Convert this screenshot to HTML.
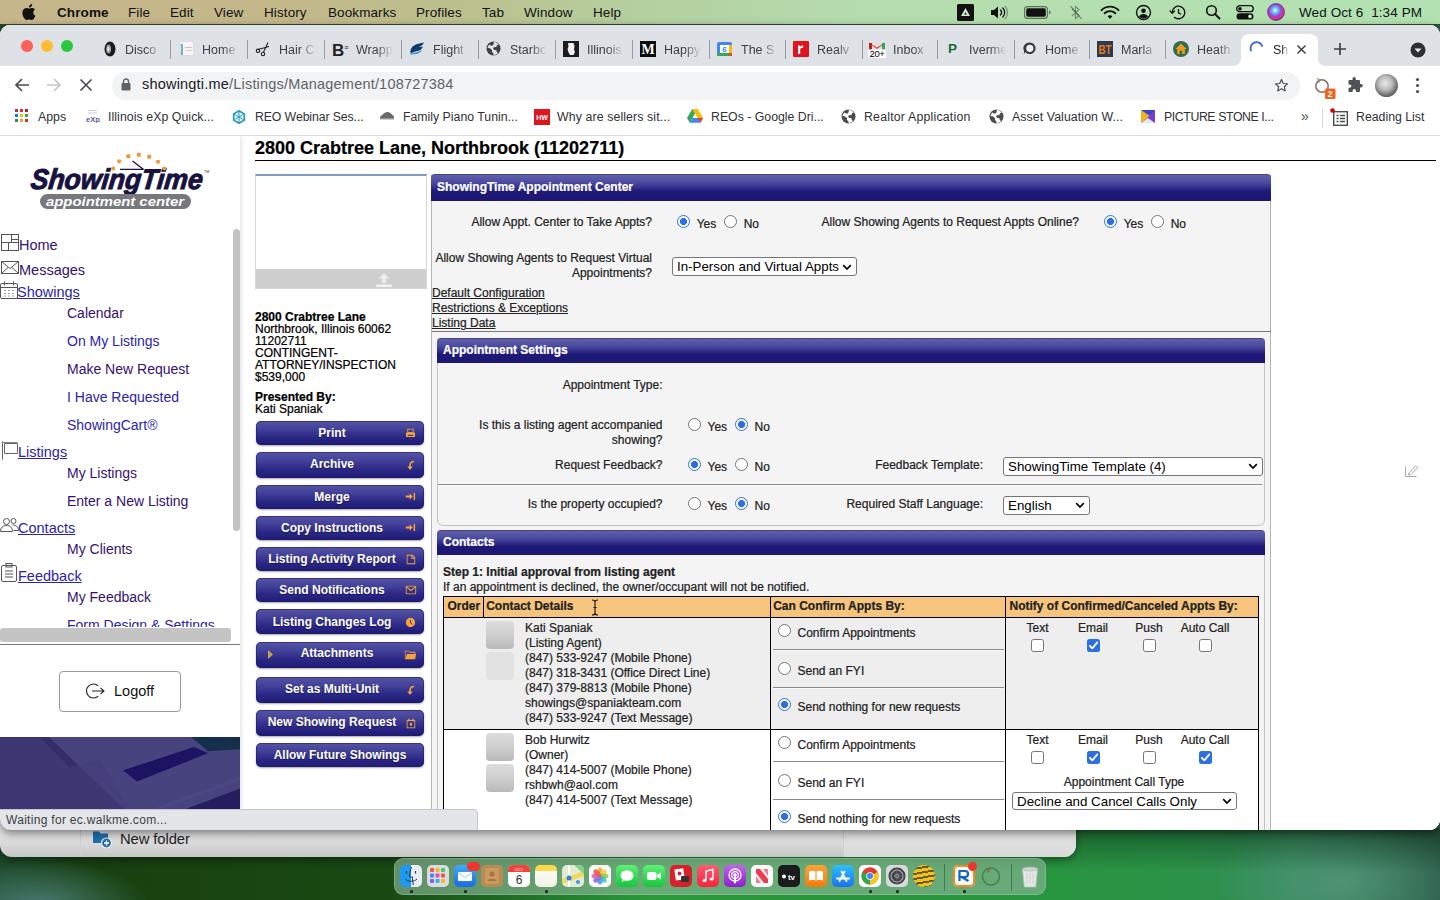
<!DOCTYPE html>
<html lang="en">
<head>
<meta charset="utf-8">
<title>ShowingTime</title>
<style>
*{box-sizing:border-box;margin:0;padding:0}
html,body{width:1440px;height:900px;overflow:hidden}
body{font-family:"Liberation Sans",Arial,sans-serif;position:relative;color:#000;
background:
 linear-gradient(180deg,rgba(10,40,20,0) 0,rgba(10,40,20,0) 828px,rgba(10,40,20,.45) 830px,rgba(10,40,20,0) 872px),
 radial-gradient(ellipse 110px 45px at 40px 905px,rgba(80,130,125,.85) 0%,rgba(80,130,125,0) 100%),
 radial-gradient(ellipse 130px 70px at 1345px 882px,rgba(95,160,135,.65) 0%,rgba(95,160,135,0) 100%),
 linear-gradient(90deg,#1d4a2a 0%,#17400f 7%,#1a4a14 27%,#1f6a25 35%,#2a9a3a 45%,#289540 73%,#2b9448 82%,#33885a 90%,#2a5a46 100%);}
.abs{position:absolute}
/* ---------- mac menu bar ---------- */
#menubar{position:absolute;left:0;top:0;width:1440px;height:25px;
background:linear-gradient(90deg,#c6b68b 0%,#c3b88a 20%,#bcc08e 32%,#b4d0a0 45%,#b5dcae 60%,#b4e0b0 80%,#b2e2b2 100%);
border-bottom:1px solid #33442b;font-size:13.5px;color:#111}
#menubar span{position:absolute;top:4.500px;white-space:nowrap;letter-spacing:.1px}
/* ---------- background finder window ---------- */
#bgwin{position:absolute;left:0;top:700px;width:1076px;height:157px;background:linear-gradient(180deg,#eaeaea 0,#e8e8e8 82%,#dcdcdc 90%,#c6c6c6 100%);border-radius:0 0 12px 12px;box-shadow:0 2px 8px rgba(0,0,0,.45)}
/* ---------- chrome window ---------- */
#winshadow{position:absolute;left:0;top:25px;width:1440px;height:805px;border-radius:10px 10px 11px 11px;box-shadow:0 3px 10px rgba(0,0,0,.5);background:#fff}
#win{position:absolute;left:0;top:0;width:1440px;height:830px;background:#fff;clip-path:inset(25px 0 0 0 round 10px 10px 11px 11px);overflow:hidden}
#tabstrip{position:absolute;left:0;top:25px;width:1440px;height:41px;background:#dee1e6}
#toolbar{position:absolute;left:0;top:66px;width:1440px;height:37px;background:#fff}
#bookbar{position:absolute;left:0;top:103px;width:1440px;height:33px;background:#fff;border-bottom:1px solid #dcdcdc}
#page{position:absolute;left:0;top:0;width:1440px;height:830px;background:#fff;overflow:hidden;clip-path:inset(135px 0 0 0);font-size:12px}

.tl{position:absolute;top:15px;width:12px;height:12px;border-radius:50%}
.tsep{position:absolute;top:15px;width:1px;height:19px;background:#9a9ea4}
.tico{position:absolute;top:16px;height:16px;display:block;line-height:0}
.ttxt{position:absolute;top:18px;font-size:12.500px;color:#3c4043;white-space:nowrap;overflow:hidden;width:37px;-webkit-mask-image:linear-gradient(90deg,#000 55%,transparent 100%);mask-image:linear-gradient(90deg,#000 55%,transparent 100%)}
#acttab{position:absolute;left:1241px;top:9px;width:76.500px;height:32px;background:#fff;border-radius:8px 8px 0 0}
#omni{position:absolute;left:112px;top:5.500px;width:1188px;height:28px;border-radius:14px;background:#f1f3f4}
.bico{position:absolute;top:6px;line-height:0;display:block}
.btxt{position:absolute;top:7px;font-size:12.300px;color:#2f3134;white-space:nowrap}

#side{position:absolute;left:0;top:135px;width:240px;height:695px;background:#fff;box-shadow:1px 0 5px rgba(0,0,0,.13)}
#side>*{margin-top:-135px}
.nav{position:absolute;font-size:14px;line-height:18px;white-space:nowrap}

.t{position:absolute;white-space:nowrap;font-size:12px;color:#000;-webkit-text-stroke:.22px}
.t.g{color:#222}
.rd{position:absolute;width:13px;height:13px;border-radius:50%;border:1px solid #767676;background:#fff}
.rd.on{border:1.500px solid #2c6fe3;background:radial-gradient(circle,#2c6fe3 0,#2c6fe3 3.200px,#fff 3.900px)}
.cb{position:absolute;width:13px;height:13px;border-radius:2.500px;border:1px solid #767676;background:#fff;line-height:0}
.cb.on{border:none;background:#2c6fe3}
.sel{position:absolute;border:1px solid #767676;border-radius:3px;background:#fff;font-size:13.330px;line-height:16px;color:#000;white-space:nowrap;overflow:hidden}
.sel span{position:absolute;left:4px;top:1.200px}
.sel svg{position:absolute;right:4px;top:5.500px}
.hdr{position:absolute;background:linear-gradient(180deg,#6060a8 0%,#4d4ba1 28%,#312d8b 50%,#1e1877 64%,#1c1674 100%);border-top:1px solid #45457f}
.btn{position:absolute;left:255.500px;width:168.500px;border-radius:5px;background:linear-gradient(180deg,#5553a2 0%,#45439a 30%,#2b2785 68%,#1e1a76 100%);box-shadow:0 1px 2px rgba(0,0,0,.35),inset 0 0 0 1px rgba(30,28,100,.55)}
.btn b{position:absolute;width:180px;text-align:center;color:#fff;font-size:12px;line-height:15px;white-space:nowrap;text-shadow:0 1px 1px rgba(0,0,20,.45)}
.btn em{position:absolute;right:7px;line-height:0;display:block;width:13px;text-align:center;transform:scale(.9)}
.sq{position:absolute;width:28px;height:28px;border-radius:4px;background:linear-gradient(180deg,#dcdcdc 0%,#cfcfcf 50%,#b9b9b9 100%)}
.sq.dis{background:#e2e2e2}

.di{position:absolute;top:6px;width:22px;height:22px;line-height:0}
.dd{position:absolute;top:31px;width:3px;height:3px;border-radius:50%;background:#0a1a0a}
/* ---------- dock ---------- */
#dock{position:absolute;left:394px;top:858px;width:652px;height:37px;border-radius:9px;background:rgba(135,180,148,.66);border:1px solid rgba(190,225,190,.3)}
</style>
</head>
<body>
<div id="menubar">
<svg class="abs" style="left:21px;top:3px" width="15" height="18" viewBox="0 0 15 18"><path fill="#111" d="M12.3 9.6c0-2 1.6-2.9 1.7-3-0.9-1.4-2.4-1.5-2.9-1.6-1.2-.1-2.400.7-3 .7-.6 0-1.600-.7-2.600-.7C4.100 5 2.800 5.800 2.100 7c-1.400 2.500-.4 6.100 1 8.100.7 1 1.500 2.100 2.500 2 1-.0 1.400-.6 2.600-.6 1.200 0 1.500.6 2.600.6 1.100-.0 1.800-1 2.400-2 .8-1.100 1.100-2.200 1.100-2.300-.0-.0-2.100-.8-2.100-3.200zM10.400 3.400c.5-.7.900-1.600.800-2.500-.8.0-1.700.5-2.300 1.200-.5.600-.9 1.500-.8 2.400.9.100 1.800-.4 2.300-1.100z"/></svg>
<span style="left:57px;font-weight:bold">Chrome</span>
<span style="left:128px">File</span>
<span style="left:170px">Edit</span>
<span style="left:214px">View</span>
<span style="left:264px">History</span>
<span style="left:328px">Bookmarks</span>
<span style="left:416px">Profiles</span>
<span style="left:482px">Tab</span>
<span style="left:524px">Window</span>
<span style="left:593px">Help</span>
<span style="left:1299px">Wed Oct 6&nbsp; 1:34 PM</span>

<svg class="abs" style="left:957px;top:4px" width="17" height="17" viewBox="0 0 17 17"><rect width="17" height="17" rx="1.500" fill="#111"/><path d="M8.500 4l4.500 8h-9z" fill="#cfe6c8"/><path d="M8.500 8.200l1.300 2.300H7.200z" fill="#111"/></svg>
<svg class="abs" style="left:990px;top:5px" width="20" height="15" viewBox="0 0 20 15"><path d="M1 5h3l4-3.500v12L4 10H1z" fill="#111"/><path d="M10.500 5a3.500 3.500 0 0 1 0 5M12.800 3a6.500 6.500 0 0 1 0 9" fill="none" stroke="#111" stroke-width="1.300" stroke-linecap="round"/><path d="M15.200 1.300a9.500 9.500 0 0 1 0 12.400" fill="none" stroke="#111" stroke-width="1.300" stroke-linecap="round" opacity=".35"/></svg>
<svg class="abs" style="left:1024px;top:6px" width="27" height="13" viewBox="0 0 27 13"><rect x="0.600" y="0.600" width="22.800" height="11.800" rx="3" fill="none" stroke="#111" stroke-opacity=".55" stroke-width="1.100"/><rect x="2.200" y="2.200" width="19.600" height="8.600" rx="1.800" fill="#111"/><path d="M25 4.500v4c1-.3 1.500-1 1.500-2s-.5-1.700-1.500-2z" fill="#111" fill-opacity=".55"/></svg>
<svg class="abs" style="left:1069px;top:4px" width="14" height="17" viewBox="0 0 14 17"><path d="M3 5l7 6.500-3.500 3V2.500l3.500 3L3 12" fill="none" stroke="#111" stroke-opacity=".4" stroke-width="1.100"/><path d="M1.500 2l11 13" stroke="#111" stroke-opacity=".5" stroke-width="1.100"/></svg>
<svg class="abs" style="left:1100px;top:5px" width="20" height="15" viewBox="0 0 20 15"><path d="M1.500 5.200a12 12 0 0 1 17 0" fill="none" stroke="#111" stroke-width="1.900" stroke-linecap="round"/><path d="M4.600 8.300a7.700 7.700 0 0 1 10.800 0" fill="none" stroke="#111" stroke-width="1.900" stroke-linecap="round"/><path d="M7.600 11.300a3.500 3.500 0 0 1 4.800 0L10 13.900z" fill="#111"/></svg>
<svg class="abs" style="left:1135px;top:4px" width="17" height="17" viewBox="0 0 17 17"><circle cx="8.500" cy="8.500" r="7" fill="none" stroke="#111" stroke-width="1.400"/><circle cx="8.500" cy="6.800" r="2.300" fill="#111"/><path d="M4 12.800c.8-2 2.500-2.800 4.500-2.800s3.700.8 4.500 2.800a6.500 6.500 0 0 1-9 0z" fill="#111"/></svg>
<svg class="abs" style="left:1169px;top:4px" width="18" height="17" viewBox="0 0 18 17"><path d="M3.200 8.500a6.300 6.300 0 1 1 1.900 4.500" fill="none" stroke="#111" stroke-width="1.400"/><path d="M.8 6.500l2.400 2.800 2.600-2.600" fill="none" stroke="#111" stroke-width="1.300"/><path d="M9.500 5v3.800l2.500 1.500" fill="none" stroke="#111" stroke-width="1.300"/></svg>
<svg class="abs" style="left:1205px;top:4px" width="16" height="16" viewBox="0 0 16 16"><circle cx="6.500" cy="6.500" r="4.800" fill="none" stroke="#111" stroke-width="1.600"/><path d="M10 10l4.500 4.500" stroke="#111" stroke-width="1.900" stroke-linecap="round"/></svg>
<svg class="abs" style="left:1236px;top:5px" width="18" height="15" viewBox="0 0 18 15"><rect x="0.700" y="0.700" width="16.600" height="6" rx="3" fill="none" stroke="#111" stroke-width="1.300"/><circle cx="4" cy="3.700" r="1.800" fill="#111"/><rect x="0.500" y="8.300" width="17" height="6.200" rx="3.100" fill="#111"/><circle cx="14" cy="11.400" r="1.800" fill="#cfe6c8"/></svg>
<svg class="abs" style="left:1267px;top:3px" width="18" height="18" viewBox="0 0 18 18"><defs><radialGradient id="siri" cx="45%" cy="40%" r="65%"><stop offset="0" stop-color="#fff"/><stop offset=".25" stop-color="#5ac8fa"/><stop offset=".55" stop-color="#a63fd9"/><stop offset=".8" stop-color="#e0338a"/><stop offset="1" stop-color="#1d1b5e"/></radialGradient></defs><circle cx="9" cy="9" r="8.500" fill="url(#siri)"/><circle cx="9" cy="9" r="8.500" fill="none" stroke="#1d1b5e" stroke-opacity=".5"/></svg>


</div>
<div id="bgwin"><i class="abs" style="left:80px;top:129px;width:1px;height:28px;background:#d0d0d0"></i>
<svg class="abs" style="left:93px;top:130px" width="19" height="19" viewBox="0 0 19 19"><path d="M0 1.500h6l1.500 2H15v9.500H0z" fill="#1f6fb0"/><circle cx="13.500" cy="13" r="5" fill="#1f6fb0" stroke="#ececec" stroke-width="1.200"/><path d="M13.500 10.500v5M11 13h5" stroke="#fff" stroke-width="1.300"/></svg>
<span class="abs" style="left:120px;top:131px;font-size:14.800px;color:#222;letter-spacing:-.1px">New folder</span>
<i class="abs" style="left:843px;top:129px;width:233px;height:28px;background:linear-gradient(180deg,#e6e6e6,#d9d9d9);border-left:1px solid #cfcfcf;border-radius:0 0 12px 0"></i></div>
<div id="winshadow"></div>
<div id="win">
  <div id="page">
<div id="side">
<svg class="abs" style="left:24px;top:148px" width="192" height="66" viewBox="0 0 192 66">
<path d="M96 21.300h23.300L108.500 13" fill="none" stroke="#17123f" stroke-width="1.300" stroke-linejoin="round"/>
<text x="6" y="41.500" font-family="Liberation Sans,sans-serif" font-size="28.500" font-weight="bold" font-style="italic" fill="#17123f" stroke="#17123f" stroke-width="1" textLength="172" lengthAdjust="spacingAndGlyphs" transform="skewX(-6)" style="transform-origin:90px 41px">ShowingTime</text>
<g fill="#ee9a3c"><circle cx="89.300" cy="20.500" r="2"/><circle cx="95.200" cy="13.300" r="2.100"/><circle cx="104.300" cy="8.300" r="2.200"/><circle cx="114.800" cy="6.700" r="2.200"/><circle cx="125.200" cy="8.800" r="2.200"/><circle cx="134" cy="13.800" r="2.100"/><circle cx="140.200" cy="20.500" r="2"/></g>
<rect x="16" y="46" width="151" height="15" rx="7.500" fill="#77787b"/>
<text x="91" y="57.500" font-family="Liberation Sans,sans-serif" font-size="13.500" font-weight="bold" font-style="italic" fill="#fff" text-anchor="middle" textLength="138" lengthAdjust="spacingAndGlyphs">appointment center</text>
<text x="180" y="25" font-family="Liberation Sans,sans-serif" font-size="3.500" fill="#17123f">TM</text>
</svg>
<span class="nav" style="left:19px;top:236px;color:#34126f;font-size:14.500px;">Home</span>
<span class="nav" style="left:19px;top:261px;color:#34126f;font-size:14.500px;">Messages</span>
<span class="nav" style="left:17px;top:283px;color:#2a24ad;text-decoration:underline;font-size:14.500px;">Showings</span>
<span class="nav" style="left:67px;top:304px;color:#34126f;">Calendar</span>
<span class="nav" style="left:67px;top:332px;color:#2a24ad;">On My Listings</span>
<span class="nav" style="left:67px;top:360px;color:#34126f;">Make New Request</span>
<span class="nav" style="left:67px;top:388px;color:#2a24ad;">I Have Requested</span>
<span class="nav" style="left:67px;top:416px;color:#2a24ad;">ShowingCart®</span>
<span class="nav" style="left:18px;top:443px;color:#2a24ad;text-decoration:underline;font-size:14.500px;">Listings</span>
<span class="nav" style="left:67px;top:464px;color:#34126f;">My Listings</span>
<span class="nav" style="left:67px;top:492px;color:#34126f;">Enter a New Listing</span>
<span class="nav" style="left:18px;top:519px;color:#2a24ad;text-decoration:underline;font-size:14.500px;">Contacts</span>
<span class="nav" style="left:67px;top:540px;color:#34126f;">My Clients</span>
<span class="nav" style="left:18px;top:567px;color:#2a24ad;text-decoration:underline;font-size:14.500px;">Feedback</span>
<span class="nav" style="left:67px;top:588px;color:#34126f;">My Feedback</span>
<span class="nav" style="left:67px;top:616px;color:#2a24ad;">Form Design &amp; Settings</span>
<svg class="abs" style="left:1px;top:234px" width="18" height="17" viewBox="0 0 18 17" fill="none" stroke="#555" stroke-width="1"><rect x="0.500" y="0.500" width="10" height="8"/><rect x="10.500" y="0.500" width="7" height="5"/><rect x="0.500" y="8.500" width="7" height="8"/><rect x="7.500" y="8.500" width="10" height="8"/><path d="M10.500 5.500h7v3"/></svg>
<svg class="abs" style="left:1px;top:261px" width="18" height="13" viewBox="0 0 18 13" fill="none" stroke="#555" stroke-width="1"><rect x="0.500" y="0.500" width="17" height="12"/><path d="M0.500 0.500l8.500 7 8.500-7M0.500 12.500l6.500-6M17.500 12.500l-6.500-6"/></svg>
<svg class="abs" style="left:0px;top:281px" width="18" height="18" viewBox="0 0 18 18" fill="none" stroke="#555" stroke-width="1"><rect x="0.500" y="2.500" width="17" height="15" rx="1.500"/><path d="M0.500 6.500h17M4.500 0.500v4M13.500 0.500v4"/><path d="M4 9.500h2M8 9.500h2M12 9.500h2M4 12.500h2M8 12.500h2M12 12.500h2M4 15h2M8 15h2M12 15h2" stroke="#999"/></svg>
<svg class="abs" style="left:1px;top:441px" width="18" height="19" viewBox="0 0 18 19" fill="none" stroke="#666" stroke-width="1"><path d="M1.500 0.500v18M3.500 2.500h13v10h-13z"/><path d="M0.500 1.500h16" stroke="#888"/></svg>
<svg class="abs" style="left:0px;top:517px" width="19" height="17" viewBox="0 0 19 17" fill="none" stroke="#555" stroke-width="1"><circle cx="6.500" cy="4.500" r="3"/><path d="M0.500 14.500c0-4 2.500-6 6-6s6 2 6 6z"/><circle cx="13.500" cy="4" r="2.500"/><path d="M12.500 8c3.500 0 6 2 6 5.500h-5"/></svg>
<svg class="abs" style="left:1px;top:563px" width="17" height="20" viewBox="0 0 17 20" fill="none" stroke="#555" stroke-width="1"><rect x="0.500" y="2.500" width="15" height="16" rx="1.500"/><rect x="5" y="0.500" width="6" height="3.500"/><path d="M4 8h8M4 11h8M4 14h8"/></svg>
<i class="abs" style="left:233px;top:229px;width:7px;height:302px;background:#c2c2c2;border-radius:4px"></i>
<i class="abs" style="left:0;top:627px;width:232px;height:16px;background:#fff"></i>
<i class="abs" style="left:0;top:628px;width:231px;height:14px;background:#c4c4c4;border-radius:3px"></i>
<i class="abs" style="left:0;top:644px;width:240px;height:1px;background:#777"></i>
<div class="abs" style="left:59px;top:671px;width:122px;height:41px;border:1px solid #9a9a9a;border-radius:4px;background:#fff"></div>
<svg class="abs" style="left:86px;top:682px" width="19" height="18" viewBox="0 0 19 18" fill="none" stroke="#222" stroke-width="1.100"><path d="M12.200 3.800A7 7 0 1 0 12.200 14.200"/><path d="M6 9h12M14.500 5.800L18 9l-3.500 3.200"/></svg>
<span class="abs" style="left:114px;top:683px;font-size:14.500px;color:#111">Logoff</span>
<svg class="abs" style="left:0;top:737px" width="240" height="93" viewBox="0 0 240 92" preserveAspectRatio="none">
<rect width="240" height="92" fill="#3d3773"/>
<path d="M48 0H240V92H140z" fill="#47437f"/>
<path d="M40 0h9l76 72h-14z" fill="#342d69"/>
<path d="M70 30l30-8 30 50H110z" fill="#443f7b" opacity=".6"/>
<path d="M191 0h49v12l-32 2z" fill="#14304c"/>
<path d="M123 33l71-23 14 6-71 28z" fill="#1c1463"/>
<path d="M184 72l56-21v41H184z" fill="#241d60"/>
<path d="M150 72l90-33v4l-80 29z" fill="#4d4988" opacity=".7"/>
</svg>
</div>

<span class="t " style="top:137.16px;line-height:22px;font-size:18px;font-weight:bold;left:255px;">2800 Crabtree Lane, Northbrook (11202711)</span>
<i class="abs" style="left:255px;top:160px;width:1181px;height:1px;background:#000"></i>
<div class="abs" style="left:255px;top:174px;width:172px;height:115px;border:1px solid #d6d6d6;border-top:2px solid #7f9dc4;background:#fff"><i class="abs" style="left:0;bottom:0;width:170px;height:19px;background:#cfcfcf"></i><svg class="abs" style="left:120px;top:97px" width="16" height="14" viewBox="0 0 16 14"><path d="M8 0l5 5.500H10V10H6V5.500H3z" fill="#eee"/><rect x="0" y="11.500" width="16" height="2.500" fill="#eee"/></svg></div>
<span class="t" style="left:255px;top:311px;line-height:12px;font-weight:bold;">2800 Crabtree Lane</span>
<span class="t" style="left:255px;top:323px;line-height:12px;">Northbrook, Illinois 60062</span>
<span class="t" style="left:255px;top:335px;line-height:12px;">11202711</span>
<span class="t" style="left:255px;top:347px;line-height:12px;">CONTINGENT-</span>
<span class="t" style="left:255px;top:359px;line-height:12px;">ATTORNEY/INSPECTION</span>
<span class="t" style="left:255px;top:371px;line-height:12px;">$539,000</span>
<span class="t" style="left:255px;top:391px;line-height:12px;font-weight:bold;">Presented By:</span>
<span class="t" style="left:255px;top:403px;line-height:12px;">Kati Spaniak</span>
<div class="btn" style="top:420.7px;height:24.4px"><b style="left:-13.5px;top:5.5px">Print</b><em style="top:7.2px"><svg width="11" height="11" viewBox="0 0 11 11"><rect x="2.500" y="0.500" width="6" height="4" fill="none" stroke="#f6a33a" stroke-width="1"/><rect x="0.500" y="4.500" width="10" height="5" rx="1" fill="#f6a33a"/><rect x="2.500" y="7" width="6" height="1.200" fill="#3a3585"/></svg></em></div>
<div class="btn" style="top:451.8px;height:26.0px"><b style="left:-13.5px;top:5.3px">Archive</b><em style="top:8.0px"><svg width="10" height="11" viewBox="0 0 10 11"><path d="M8.500 1C6 1 4 2.500 4 5.500V8" fill="none" stroke="#f6a33a" stroke-width="1.800"/><path d="M1 6.500h6L4 10.500z" fill="#f6a33a"/></svg></em></div>
<div class="btn" style="top:484.9px;height:24.0px"><b style="left:-13.5px;top:5.3px">Merge</b><em style="top:7.0px"><svg width="11" height="9" viewBox="0 0 11 9"><path d="M0 4.500h6" stroke="#f6a33a" stroke-width="2"/><path d="M4.500 1L8 4.500 4.500 8z" fill="#f6a33a"/><rect x="9" y="0.500" width="1.800" height="8" fill="#f6a33a"/></svg></em></div>
<div class="btn" style="top:516px;height:24px"><b style="left:-13.5px;top:5.3px">Copy Instructions</b><em style="top:7.0px"><svg width="11" height="9" viewBox="0 0 11 9"><path d="M0 4.500h6" stroke="#f6a33a" stroke-width="2"/><path d="M4.500 1L8 4.500 4.500 8z" fill="#f6a33a"/><rect x="9" y="0.500" width="1.800" height="8" fill="#f6a33a"/></svg></em></div>
<div class="btn" style="top:547px;height:23.8px"><b style="left:-13.5px;top:5.2px">Listing Activity Report</b><em style="top:6.9px"><svg width="10" height="11" viewBox="0 0 10 11"><path d="M0.600 0.600H6.500L9.400 3.500V10.400H0.600z" fill="none" stroke="#f6a33a" stroke-width="1.200"/><path d="M6 0.600V4H9.400" fill="none" stroke="#f6a33a" stroke-width="1.200"/></svg></em></div>
<div class="btn" style="top:577.8px;height:23.8px"><b style="left:-13.5px;top:5.2px">Send Notifications</b><em style="top:6.9px"><svg width="12" height="10" viewBox="0 0 12 10"><rect x="0.600" y="0.600" width="10.800" height="8.800" rx="1" fill="none" stroke="#f6a33a" stroke-width="1.200"/><path d="M1 1.500l5 4 5-4" fill="none" stroke="#f6a33a" stroke-width="1.200"/></svg></em></div>
<div class="btn" style="top:609px;height:25.4px"><b style="left:-13.5px;top:6.0px">Listing Changes Log</b><em style="top:7.7px"><svg width="11" height="11" viewBox="0 0 11 11"><circle cx="5.500" cy="5.500" r="5.200" fill="#f6a33a"/><path d="M5.500 2.500V6l2 1.500" fill="none" stroke="#3a3585" stroke-width="1.100"/></svg></em></div>
<div class="btn" style="top:642.2px;height:25.6px"><b style="left:-8.5px;top:4.1px">Attachments</b><em style="top:7.8px"><svg width="13" height="10" viewBox="0 0 13 10"><path d="M0.500 0.500h4l1 1.500h6V9.500H0.500z" fill="none" stroke="#f6a33a" stroke-width="1"/><path d="M2.500 4h10.200L11 9.500H0.800z" fill="#f6a33a"/></svg></em><svg class="abs" style="left:12px;top:8.3px" width="6" height="9" viewBox="0 0 6 9"><path d="M0 0l5 4.500L0 9z" fill="#c9a050"/></svg></div>
<div class="btn" style="top:676.7px;height:26.2px"><b style="left:-13.5px;top:5.1px">Set as Multi-Unit</b><em style="top:8.1px"><svg width="10" height="11" viewBox="0 0 10 11"><path d="M8.500 1C6 1 4 2.500 4 5.500V8" fill="none" stroke="#f6a33a" stroke-width="1.800"/><path d="M1 6.500h6L4 10.500z" fill="#f6a33a"/></svg></em></div>
<div class="btn" style="top:710px;height:25.6px"><b style="left:-13.5px;top:5.1px">New Showing Request</b><em style="top:7.8px"><svg width="10" height="11" viewBox="0 0 10 11"><rect x="0.600" y="2.100" width="8.800" height="8.300" fill="none" stroke="#f6a33a" stroke-width="1.200"/><rect x="2" y="0" width="1.500" height="3" fill="#f6a33a"/><rect x="6.500" y="0" width="1.500" height="3" fill="#f6a33a"/><rect x="3.800" y="5" width="2.400" height="3" fill="#f6a33a"/></svg></em></div>
<div class="btn" style="top:743px;height:24px"><b style="left:-5.5px;top:5.3px">Allow Future Showings</b></div>
<div class="abs" style="left:431px;top:175px;width:840px;height:700px;background:#f4f4f4;border:1px solid #b4b4b4;border-top:none"></div>
<div class="hdr" style="left:431px;top:174px;width:840px;height:26.500px;border-radius:4px 4px 0 0"></div>
<span class="t " style="top:180.34px;line-height:15px;font-weight:bold;color:#fff;left:437px;">ShowingTime Appointment Center</span>
<span class="t g" style="top:214.84px;line-height:15px;right:788px;text-align:right;">Allow Appt. Center to Take Appts?</span>
<i class="rd on" style="left:676.5px;top:215.2px"></i>
<span class="t g" style="top:216.84px;line-height:15px;left:696.7px;">Yes</span>
<i class="rd" style="left:723.5px;top:215.2px"></i>
<span class="t g" style="top:216.84px;line-height:15px;left:743.7px;">No</span>
<span class="t g" style="top:214.84px;line-height:15px;right:361px;text-align:right;">Allow Showing Agents to Request Appts Online?</span>
<i class="rd on" style="left:1103.5px;top:215.2px"></i>
<span class="t g" style="top:216.84px;line-height:15px;left:1123.7px;">Yes</span>
<i class="rd" style="left:1150.5px;top:215.2px"></i>
<span class="t g" style="top:216.84px;line-height:15px;left:1170.7px;">No</span>
<span class="t g" style="top:251.34px;line-height:15px;right:788px;text-align:right;">Allow Showing Agents to Request Virtual</span>
<span class="t g" style="top:266.34px;line-height:15px;right:788px;text-align:right;">Appointments?</span>
<div class="sel" style="left:672px;top:257px;width:185px;height:18.5px"><span>In-Person and Virtual Appts</span><svg width="10" height="7" viewBox="0 0 10 7"><path d="M1.200 1.200L5 5l3.800-3.800" fill="none" stroke="#000" stroke-width="1.700"/></svg></div>
<span class="t g" style="top:286.34px;line-height:15px;left:432px;text-decoration:underline;">Default Configuration</span>
<span class="t g" style="top:301.34px;line-height:15px;left:432px;text-decoration:underline;">Restrictions &amp; Exceptions</span>
<span class="t g" style="top:316.34px;line-height:15px;left:432px;text-decoration:underline;">Listing Data</span>
<i class="abs" style="left:432px;top:331px;width:839px;height:1px;background:#777"></i>
<div class="abs" style="left:437px;top:350px;width:828px;height:176px;background:#f4f4f4;border:1px solid #c2c2c2;border-radius:0 0 6px 6px"></div>
<div class="hdr" style="left:437px;top:337.500px;width:828px;height:25.500px;border-radius:4px 4px 0 0"></div>
<span class="t " style="top:343.04px;line-height:15px;font-weight:bold;color:#fff;left:443px;">Appointment Settings</span>
<span class="t g" style="top:378.14px;line-height:15px;right:777.5px;text-align:right;">Appointment Type:</span>
<span class="t g" style="top:418.14px;line-height:15px;right:777.5px;text-align:right;">Is this a listing agent accompanied</span>
<span class="t g" style="top:433.14px;line-height:15px;right:777.5px;text-align:right;">showing?</span>
<i class="rd" style="left:687.7px;top:418.0px"></i>
<span class="t g" style="top:419.84px;line-height:15px;left:707.5px;">Yes</span>
<i class="rd on" style="left:734.7px;top:418.0px"></i>
<span class="t g" style="top:419.84px;line-height:15px;left:754.5px;">No</span>
<span class="t g" style="top:458.14px;line-height:15px;right:777.5px;text-align:right;">Request Feedback?</span>
<i class="rd on" style="left:687.7px;top:458.0px"></i>
<span class="t g" style="top:459.84px;line-height:15px;left:707.5px;">Yes</span>
<i class="rd" style="left:734.7px;top:458.0px"></i>
<span class="t g" style="top:459.84px;line-height:15px;left:754.5px;">No</span>
<span class="t g" style="top:458.14px;line-height:15px;right:457px;text-align:right;">Feedback Template:</span>
<div class="sel" style="left:1003px;top:456.5px;width:260px;height:19px"><span>ShowingTime Template (4)</span><svg width="10" height="7" viewBox="0 0 10 7"><path d="M1.200 1.200L5 5l3.800-3.800" fill="none" stroke="#000" stroke-width="1.700"/></svg></div>
<i class="abs" style="left:438px;top:484px;width:824px;height:1px;background:#8a8a8a;box-shadow:0 1px 0 #fbfbfb"></i>
<span class="t g" style="top:496.84px;line-height:15px;right:777.5px;text-align:right;">Is the property occupied?</span>
<i class="rd" style="left:687.7px;top:497.2px"></i>
<span class="t g" style="top:498.84px;line-height:15px;left:707.5px;">Yes</span>
<i class="rd on" style="left:734.7px;top:497.2px"></i>
<span class="t g" style="top:498.84px;line-height:15px;left:754.5px;">No</span>
<span class="t g" style="top:496.84px;line-height:15px;right:457px;text-align:right;">Required Staff Language:</span>
<div class="sel" style="left:1003px;top:495.5px;width:87px;height:19px"><span>English</span><svg width="10" height="7" viewBox="0 0 10 7"><path d="M1.200 1.200L5 5l3.800-3.800" fill="none" stroke="#000" stroke-width="1.700"/></svg></div>
<div class="abs" style="left:437px;top:545px;width:828px;height:330px;background:#f4f4f4;border:1px solid #c2c2c2"></div>
<div class="hdr" style="left:437px;top:529.500px;width:828px;height:25.500px;border-radius:4px 4px 0 0"></div>
<span class="t " style="top:535.34px;line-height:15px;font-weight:bold;color:#fff;left:443px;">Contacts</span>
<span class="t g" style="top:565.14px;line-height:15px;font-weight:bold;left:443px;">Step 1: Initial approval from listing agent</span>
<span class="t g" style="top:580.14px;line-height:15px;left:443px;">If an appointment is declined, the owner/occupant will not be notified.</span>
<div class="abs" style="left:443px;top:596px;width:816px;height:260px;border:1px solid #000;background:#fff"></div>
<i class="abs" style="left:444px;top:597px;width:814px;height:20px;background:#f6c47d"></i>
<i class="abs" style="left:444px;top:618px;width:814px;height:111px;background:#eeeeee"></i>
<i class="abs" style="left:444px;top:617px;width:814px;height:1px;background:#000"></i>
<i class="abs" style="left:444px;top:729px;width:814px;height:1px;background:#000"></i>
<i class="abs" style="left:482.500px;top:597px;width:1px;height:20px;background:#000"></i>
<i class="abs" style="left:769.500px;top:597px;width:1px;height:260px;background:#000"></i>
<i class="abs" style="left:1005px;top:597px;width:1px;height:260px;background:#000"></i>
<span class="t g" style="top:599.34px;line-height:15px;font-weight:bold;left:447.5px;">Order</span>
<span class="t g" style="top:599.34px;line-height:15px;font-weight:bold;left:486.2px;">Contact Details</span>
<span class="t g" style="top:599.34px;line-height:15px;font-weight:bold;left:773.2px;">Can Confirm Appts By:</span>
<span class="t g" style="top:599.34px;line-height:15px;font-weight:bold;left:1009.5px;">Notify of Confirmed/Canceled Appts By:</span>
<svg class="abs" style="left:591px;top:599px" width="8" height="17" viewBox="0 0 8 17"><path d="M1 1c2 0 3 .5 3 2v11c0 1.500-1 2-3 2M7 1c-2 0-3 .5-3 2v11c0 1.500 1 2 3 2M2.500 8.500h3" fill="none" stroke="#111" stroke-width="1.100"/></svg>
<span class="t g" style="top:621.34px;line-height:15px;left:525px;">Kati Spaniak</span>
<span class="t g" style="top:636.34px;line-height:15px;left:525px;">(Listing Agent)</span>
<span class="t g" style="top:651.34px;line-height:15px;left:525px;">(847) 533-9247 (Mobile Phone)</span>
<span class="t g" style="top:666.34px;line-height:15px;left:525px;">(847) 318-3431 (Office Direct Line)</span>
<span class="t g" style="top:681.34px;line-height:15px;left:525px;">(847) 379-8813 (Mobile Phone)</span>
<span class="t g" style="top:696.34px;line-height:15px;left:525px;">showings@spaniakteam.com</span>
<span class="t g" style="top:711.34px;line-height:15px;left:525px;">(847) 533-9247 (Text Message)</span>
<i class="sq" style="left:486px;top:621px"></i><i class="sq dis" style="left:486px;top:652px"></i>
<span class="t g" style="top:733.14px;line-height:15px;left:525px;">Bob Hurwitz</span>
<span class="t g" style="top:748.14px;line-height:15px;left:525px;">(Owner)</span>
<span class="t g" style="top:763.14px;line-height:15px;left:525px;">(847) 414-5007 (Mobile Phone)</span>
<span class="t g" style="top:778.14px;line-height:15px;left:525px;">rshbwh@aol.com</span>
<span class="t g" style="top:793.14px;line-height:15px;left:525px;">(847) 414-5007 (Text Message)</span>
<i class="sq" style="left:486px;top:733px"></i><i class="sq" style="left:486px;top:764px"></i>
<i class="rd" style="left:777.7px;top:624.0px"></i>
<span class="t g" style="top:625.64px;line-height:15px;left:797.5px;">Confirm Appointments</span>
<i class="abs" style="left:772.500px;top:649px;width:231px;height:1px;background:#8a8a8a;box-shadow:0 1px 0 rgba(255,255,255,.6)"></i>
<i class="rd" style="left:777.7px;top:662.2px"></i>
<span class="t g" style="top:664.34px;line-height:15px;left:797.5px;">Send an FYI</span>
<i class="abs" style="left:772.500px;top:687px;width:231px;height:1px;background:#8a8a8a;box-shadow:0 1px 0 rgba(255,255,255,.6)"></i>
<i class="rd on" style="left:777.7px;top:698.0px"></i>
<span class="t g" style="top:700.14px;line-height:15px;left:797.5px;">Send nothing for new requests</span>
<i class="rd" style="left:777.7px;top:736.0px"></i>
<span class="t g" style="top:737.64px;line-height:15px;left:797.5px;">Confirm Appointments</span>
<i class="abs" style="left:772.500px;top:761px;width:231px;height:1px;background:#8a8a8a;box-shadow:0 1px 0 rgba(255,255,255,.6)"></i>
<i class="rd" style="left:777.7px;top:774.2px"></i>
<span class="t g" style="top:776.34px;line-height:15px;left:797.5px;">Send an FYI</span>
<i class="abs" style="left:772.500px;top:799px;width:231px;height:1px;background:#8a8a8a;box-shadow:0 1px 0 rgba(255,255,255,.6)"></i>
<i class="rd on" style="left:777.7px;top:810.0px"></i>
<span class="t g" style="top:812.14px;line-height:15px;left:797.5px;">Send nothing for new requests</span>
<span class="t g" style="top:621.14px;line-height:15px;left:887.5px;width:300px;text-align:center;">Text</span>
<i class="cb" style="left:1031.0px;top:639.0px"></i>
<span class="t g" style="top:621.14px;line-height:15px;left:943px;width:300px;text-align:center;">Email</span>
<i class="cb on" style="left:1086.5px;top:639.0px"><svg width="13" height="13" viewBox="0 0 13 13"><path d="M2.800 6.800l2.500 2.600 5-6" fill="none" stroke="#fff" stroke-width="1.800" stroke-linecap="round" stroke-linejoin="round"/></svg></i>
<span class="t g" style="top:621.14px;line-height:15px;left:999px;width:300px;text-align:center;">Push</span>
<i class="cb" style="left:1142.5px;top:639.0px"></i>
<span class="t g" style="top:621.14px;line-height:15px;left:1055px;width:300px;text-align:center;">Auto Call</span>
<i class="cb" style="left:1198.5px;top:639.0px"></i>
<span class="t g" style="top:733.14px;line-height:15px;left:887.5px;width:300px;text-align:center;">Text</span>
<i class="cb" style="left:1031.0px;top:751.0px"></i>
<span class="t g" style="top:733.14px;line-height:15px;left:943px;width:300px;text-align:center;">Email</span>
<i class="cb on" style="left:1086.5px;top:751.0px"><svg width="13" height="13" viewBox="0 0 13 13"><path d="M2.800 6.800l2.500 2.600 5-6" fill="none" stroke="#fff" stroke-width="1.800" stroke-linecap="round" stroke-linejoin="round"/></svg></i>
<span class="t g" style="top:733.14px;line-height:15px;left:999px;width:300px;text-align:center;">Push</span>
<i class="cb" style="left:1142.5px;top:751.0px"></i>
<span class="t g" style="top:733.14px;line-height:15px;left:1055px;width:300px;text-align:center;">Auto Call</span>
<i class="cb on" style="left:1198.5px;top:751.0px"><svg width="13" height="13" viewBox="0 0 13 13"><path d="M2.800 6.800l2.500 2.600 5-6" fill="none" stroke="#fff" stroke-width="1.800" stroke-linecap="round" stroke-linejoin="round"/></svg></i>
<span class="t g" style="top:775.34px;line-height:15px;left:974px;width:300px;text-align:center;">Appointment Call Type</span>
<div class="sel" style="left:1012px;top:791.5px;width:225px;height:18.5px"><span>Decline and Cancel Calls Only</span><svg width="10" height="7" viewBox="0 0 10 7"><path d="M1.200 1.200L5 5l3.800-3.800" fill="none" stroke="#000" stroke-width="1.700"/></svg></div>
<svg class="abs" style="left:1405px;top:464px" width="14" height="13" viewBox="0 0 14 13" fill="none" stroke="#a8a8a8" stroke-width="1"><path d="M0.500 2.500v10h11"/><path d="M4 9l6.500-7 2 1.500L6 10.500l-2.500.5z"/></svg>
<div class="abs" style="left:-1px;top:809px;width:479px;height:22px;background:#e3e5e9;border:1px solid #c3c6cb;border-radius:0 4px 0 0"></div><span class="abs" style="left:6px;top:813px;font-size:12px;letter-spacing:.3px;color:#3c4043">Waiting for ec.walkme.com...</span>
  </div>
  <div id="tabstrip">
<i class="tl" style="left:21px;background:#fe5f57"></i><i class="tl" style="left:41px;background:#febc2e"></i><i class="tl" style="left:61px;background:#28c840"></i>
<span class="tico" style="left:103px"><svg width="14" height="16" viewBox="0 0 14 16"><ellipse cx="7" cy="8" rx="5.5" ry="7.5" fill="#1b1b1b"/><ellipse cx="5.6" cy="8" rx="2.4" ry="4.6" fill="#9a9a9a"/><ellipse cx="5.4" cy="8" rx="1.2" ry="2.6" fill="#e8e8e8"/></svg></span>
<span class="ttxt" style="left:125px">Disco</span>
<i class="tsep" style="left:170px"></i>
<span class="tico" style="left:180px"><svg width="15" height="15" viewBox="0 0 15 15"><rect x="0.5" y="0.5" width="13" height="14" fill="#f4f6f8" stroke="#d8dde2"/><rect x="1" y="3" width="2" height="11" fill="#6fb7c9"/><rect x="5" y="6" width="7" height="1" fill="#e6b9a8"/><rect x="5" y="9" width="7" height="1" fill="#e6d3a8"/></svg></span>
<span class="ttxt" style="left:202px">Home</span>
<i class="tsep" style="left:247px"></i>
<span class="tico" style="left:255px"><svg width="16" height="16" viewBox="0 0 16 16" fill="none" stroke="#222" stroke-width="1.1"><path d="M3 8.500L14 5.500M13 1.500L8.500 11"/><circle cx="3" cy="9.800" r="1.700"/><circle cx="8" cy="13" r="1.700"/></svg></span>
<span class="ttxt" style="left:279px">Hair C</span>
<i class="tsep" style="left:324px"></i>
<span class="tico" style="left:332px"><span style="font:bold 17px 'Liberation Sans',sans-serif;color:#222;line-height:16px;display:block;margin-top:-1px">B<span style="font-size:7px;vertical-align:6px;letter-spacing:-.5px">≡</span></span></span>
<span class="ttxt" style="left:356px">Wrapp</span>
<i class="tsep" style="left:401px"></i>
<span class="tico" style="left:409px"><svg width="16" height="15" viewBox="0 0 16 15"><path d="M2 13c-1.500-3 0-6.500 3-8.500 3-2 7-2.500 10-3-1 2-2.500 3.500-5 4.500 1.500 0 2.500 0 4-.5-1 2.500-3 4-5.500 4.500-3 .6-5 1-6.500 3z" fill="#123c6e"/><path d="M1 14c1.500-2 4-2.500 7-3 2-.4 3.500-1.200 5-2.500-.5 2-2 3.500-4.500 4.200-2.500.7-5 .3-7.500 1.300z" fill="#2f9fe0"/></svg></span>
<span class="ttxt" style="left:433px">Flight</span>
<i class="tsep" style="left:478px"></i>
<span class="tico" style="left:486px"><svg width="15" height="15" viewBox="0 0 16 16"><circle cx="8" cy="8" r="7.500" fill="#3c4043"/><path d="M8.300 .8c2.200.2 4 1.300 5.200 3l-1.800.7-.7 1.800-2.600.4-.8 1.300 1.200 1.600 2.200.1.500 1.900 1.300 1.100c-1.200 1.400-2.900 2.300-4.800 2.500l-.1-2.100-1.600-1.400.1-2-3-2.300-1.900.300c.3-1.500 1-2.800 2-3.900l1.700 1.100 2.100-.2.900-1.700z" fill="#dee1e6"/></svg></span>
<span class="ttxt" style="left:510px">Starbc</span>
<i class="tsep" style="left:555px"></i>
<span class="tico" style="left:563px"><svg width="16" height="16" viewBox="0 0 16 16"><rect width="16" height="16" fill="#1c1c1c"/><path d="M5 2h5.500l1 3-.5 3.500 1 2.500-1.500 3H7l-1.500-2.500L4.500 8l1-2.500z" fill="#f1f1f1"/></svg></span>
<span class="ttxt" style="left:587px">Illinois</span>
<i class="tsep" style="left:632px"></i>
<span class="tico" style="left:640px"><svg width="16" height="16" viewBox="0 0 16 16"><rect width="16" height="16" fill="#0b0b0b"/><text x="8" y="13" font-family="Liberation Serif,serif" font-size="14" font-weight="bold" fill="#fff" text-anchor="middle">M</text></svg></span>
<span class="ttxt" style="left:664px">Happy</span>
<i class="tsep" style="left:709px"></i>
<span class="tico" style="left:717px"><svg width="16" height="16" viewBox="0 0 16 16"><rect x="0" y="1" width="15" height="14" rx="2" fill="#4285f4"/><rect x="0" y="12" width="12" height="3" fill="#34a853"/><rect x="12" y="4" width="3" height="8" fill="#fbbc04"/><rect x="12" y="12" width="3" height="3" fill="#ea4335"/><rect x="3" y="4" width="9" height="8" fill="#fff"/><text x="7.500" y="11.300" font-family="Liberation Sans,sans-serif" font-size="8" font-weight="bold" fill="#4285f4" text-anchor="middle">6</text></svg></span>
<span class="ttxt" style="left:741px">The S</span>
<i class="tsep" style="left:785px"></i>
<span class="tico" style="left:793px"><svg width="16" height="16" viewBox="0 0 16 16"><rect width="16" height="16" rx="1" fill="#e0141d"/><path d="M5 13V4.500h2v1.300c.6-1 1.600-1.500 3.200-1.400v2.300C8.200 6.500 7.200 7.300 7.200 9v4z" fill="#fff"/></svg></span>
<span class="ttxt" style="left:817px">Realv</span>
<i class="tsep" style="left:862px"></i>
<span class="tico" style="left:868px"><svg width="18" height="17" viewBox="0 0 18 17"><path d="M1 1.500v7h3V4.500L9 8l5-3.500V8.500h3v-7L9 6.500z" fill="#ea4335"/><rect x="1" y="1.500" width="3" height="7" fill="#4285f4" opacity=".0"/><rect x="14" y="2" width="3" height="6.500" fill="#34a853"/><rect x="1" y="2" width="3" height="6.500" fill="#c5221f"/><rect x="0" y="8.500" width="18" height="8.500" fill="#fff"/><text x="9" y="16.200" font-family="Liberation Sans,sans-serif" font-size="9.500" fill="#000" text-anchor="middle" letter-spacing="-.4">20+</text></svg></span>
<span class="ttxt" style="left:893px">Inbox</span>
<i class="tsep" style="left:937px"></i>
<span class="tico" style="left:945px"><span style="font:bold 13.500px 'Liberation Sans',sans-serif;color:#1a6b3c;line-height:16px;display:block;padding-left:3px">P</span></span>
<span class="ttxt" style="left:969px">Iverme</span>
<i class="tsep" style="left:1014px"></i>
<span class="tico" style="left:1022px"><svg width="15" height="15" viewBox="0 0 15 15"><path d="M7.800 1.500a5.800 5.800 0 1 1-4.500 9.500L1.800 13.500l.3-3.500A5.800 5.800 0 0 1 7.800 1.500z" fill="#3b3b3b"/><circle cx="7.800" cy="7.300" r="3.600" fill="#eef0f3"/></svg></span>
<span class="ttxt" style="left:1045px">Home</span>
<i class="tsep" style="left:1089px"></i>
<span class="tico" style="left:1097px"><svg width="16" height="16" viewBox="0 0 16 16"><rect width="16" height="16" fill="#2c3a4a"/><text x="8" y="13" font-family="Liberation Sans,sans-serif" font-size="13" font-weight="bold" fill="#e87722" text-anchor="middle" textLength="13" lengthAdjust="spacingAndGlyphs">BT</text></svg></span>
<span class="ttxt" style="left:1121px">Marla</span>
<i class="tsep" style="left:1165px"></i>
<span class="tico" style="left:1173px"><svg width="16" height="16" viewBox="0 0 16 16"><circle cx="8" cy="8" r="8" fill="#2f6e4e"/><path d="M8 2.500L2.500 8H4.200v5h2.600V9.800h2.400V13h2.600V8h1.700z" fill="#f39a1e"/></svg></span>
<span class="ttxt" style="left:1197px">Heath</span>
<div id="acttab"></div>
<svg class="abs" style="left:1233px;top:33px" width="8" height="8" viewBox="0 0 10 10"><path d="M0 10h10V0C10 6 6 10 0 10z" fill="#fff"/></svg>
<svg class="abs" style="left:1317.500px;top:33px" width="8" height="8" viewBox="0 0 10 10"><path d="M10 10H0V0c0 6 4 10 10 10z" fill="#fff"/></svg>
<svg class="abs" style="left:1249px;top:16px" width="16" height="16" viewBox="0 0 16 16"><path d="M2 9.500A6 6 0 0 1 13.200 5" fill="none" stroke="#3367d6" stroke-width="1.800" stroke-linecap="round"/></svg>
<span class="ttxt" style="left:1273px;width:16px;color:#202124">Sh</span>
<svg class="abs" style="left:1296px;top:19px" width="11" height="11" viewBox="0 0 11 11"><path d="M1.500 1.500l8 8M9.500 1.500l-8 8" stroke="#3c4043" stroke-width="1.500" fill="none"/></svg>
<svg class="abs" style="left:1333px;top:17px" width="14" height="14" viewBox="0 0 14 14"><path d="M7 1v12M1 7h12" stroke="#3c4043" stroke-width="1.700" fill="none"/></svg>
<svg class="abs" style="left:1410px;top:17px" width="16" height="16" viewBox="0 0 16 16"><circle cx="8" cy="8" r="7.500" fill="#2d2f33"/><path d="M4.500 6.500h7L8 10.500z" fill="#e8eaed"/></svg>

  </div>
  <div id="toolbar">

<svg class="abs" style="left:14px;top:11px" width="16" height="16" viewBox="0 0 16 16"><path d="M15 8H2.500M8 2L2 8l6 6" fill="none" stroke="#4a4d51" stroke-width="1.700"/></svg>
<svg class="abs" style="left:46px;top:11px" width="16" height="16" viewBox="0 0 16 16"><path d="M1 8h12.500M8 2l6 6-6 6" fill="none" stroke="#c2c5c9" stroke-width="1.700"/></svg>
<svg class="abs" style="left:79px;top:12px" width="14" height="14" viewBox="0 0 14 14"><path d="M1.500 1.500l11 11M12.500 1.500l-11 11" fill="none" stroke="#4a4d51" stroke-width="1.700"/></svg>
<div id="omni"></div>
<svg class="abs" style="left:121px;top:12px" width="10" height="13" viewBox="0 0 10 13"><rect x="0.500" y="5" width="9" height="7.500" rx="1" fill="#5f6368"/><path d="M2.500 5.500V3.500a2.500 2.500 0 0 1 5 0v2" fill="none" stroke="#5f6368" stroke-width="1.400"/></svg>
<span class="abs" style="left:142px;top:10px;font-size:14.500px;color:#202124;white-space:nowrap;letter-spacing:.2px">showingti.me<span style="color:#5f6368">/Listings/Management/108727384</span></span>
<svg class="abs" style="left:1274px;top:11.500px" width="15" height="15" viewBox="0 0 17 17"><path d="M8.500 1.800l2 4.400 4.800.5-3.600 3.200 1 4.700-4.200-2.400-4.200 2.400 1-4.700L1.700 6.700l4.800-.5z" fill="none" stroke="#4a4d51" stroke-width="1.300" stroke-linejoin="round"/></svg>
<svg class="abs" style="left:1311px;top:9px" width="26" height="26" viewBox="0 0 26 26"><circle cx="11" cy="11" r="6.200" fill="none" stroke="#7a7468" stroke-width="1.500"/><path d="M6 3.500l3 1.500-1.500 2.500" fill="none" stroke="#9a8a68" stroke-width="1.300"/><rect x="14" y="13.500" width="10.500" height="10.500" rx="1.500" fill="#f0641e"/><text x="19.200" y="22.300" font-family="Liberation Sans,sans-serif" font-size="8.500" font-weight="bold" fill="#fff" text-anchor="middle">2</text></svg>
<svg class="abs" style="left:1346px;top:10px" width="17" height="17" viewBox="0 0 17 17"><path d="M6.500 2.800a1.700 1.700 0 0 1 3.400 0V4H13a1 1 0 0 1 1 1v3h1a1.800 1.800 0 0 1 0 3.600h-1V15a1 1 0 0 1-1 1H10v-1.200a1.700 1.700 0 0 0-3.400 0V16H3.500a1 1 0 0 1-1-1v-3.200h1.200a1.700 1.700 0 0 0 0-3.400H2.500V5a1 1 0 0 1 1-1h3z" fill="#4f5256"/></svg>
<div class="abs" style="left:1375px;top:8px;width:23px;height:23px;border-radius:50%;background:radial-gradient(circle at 45% 40%,#e8e8e8 0,#bdbdbd 35%,#6e6e6e 65%,#3a3a3a 100%)"></div>
<svg class="abs" style="left:1415px;top:11px" width="5" height="17" viewBox="0 0 5 17"><circle cx="2.500" cy="2.500" r="1.600" fill="#4a4d51"/><circle cx="2.500" cy="8.500" r="1.600" fill="#4a4d51"/><circle cx="2.500" cy="14.500" r="1.600" fill="#4a4d51"/></svg>

  </div>
  <div id="bookbar">
<span class="bico" style="left:14.5px"><svg width="14" height="14" viewBox="0 0 14 14"><g><rect x="0" y="0" width="3" height="3" fill="#b5313a"/><rect x="5" y="0" width="3" height="3" fill="#d93025"/><rect x="10" y="0" width="3" height="3" fill="#a0282f"/><rect x="0" y="5" width="3" height="3" fill="#1a73e8"/><rect x="5" y="5" width="3" height="3" fill="#fbbc04"/><rect x="10" y="5" width="3" height="3" fill="#34a853"/><rect x="0" y="10" width="3" height="3" fill="#2e8b57"/><rect x="5" y="10" width="3" height="3" fill="#e8a33d"/><rect x="10" y="10" width="3" height="3" fill="#d93025"/></g></svg></span><span class="btxt" style="left:38px;letter-spacing:0px">Apps</span>
<span class="bico" style="left:86px"><svg width="14" height="14" viewBox="0 0 14 14"><rect x="2" y="1" width="9" height="1" fill="#c9cbe0"/><rect x="2" y="3.500" width="9" height="1" fill="#c9cbe0"/><text x="7" y="12.500" font-family="Liberation Sans,sans-serif" font-size="7.500" font-weight="bold" fill="#5a5aa0" text-anchor="middle">eXp</text></svg></span><span class="btxt" style="left:108px;letter-spacing:0.07px">Illinois eXp Quick...</span>
<span class="bico" style="left:231px"><svg width="16" height="16" viewBox="0 0 16 16"><path d="M8 .8l6.200 3.600v7.200L8 15.200 1.800 11.600V4.400z" fill="#2e9dc0"/><circle cx="8" cy="8" r="4.600" fill="#dff3fa"/><path d="M8 4.200v7.600M4.700 6.100l6.600 3.800M11.300 6.100L4.700 9.900" stroke="#2e9dc0" stroke-width="1"/></svg></span><span class="btxt" style="left:255px;letter-spacing:-0.11px">REO Webinar Ses...</span>
<span class="bico" style="left:379px"><svg width="16" height="12" viewBox="0 0 16 12"><path d="M1 8.500c0-1.500 2-2 3-3.200C5 4 6.500 3 8.500 3s3 1 4 2c1 1 2.500 1.500 2.500 3.500v1H1z" fill="#6a6a6a"/><rect x="1" y="9" width="14" height="1.500" fill="#9a9a9a"/></svg></span><span class="btxt" style="left:403px;letter-spacing:0px">Family Piano Tunin...</span>
<span class="bico" style="left:534px"><svg width="16" height="16" viewBox="0 0 16 16"><rect width="16" height="16" fill="#e0161e"/><text x="8" y="11" font-family="Liberation Sans,sans-serif" font-size="7" font-weight="bold" fill="#fff" text-anchor="middle">HW</text></svg></span><span class="btxt" style="left:557px;letter-spacing:0.12px">Why are sellers sit...</span>
<span class="bico" style="left:687px"><svg width="16" height="14" viewBox="0 0 16 14"><path d="M5.300 0h5.400l5.300 9h-5.400z" fill="#fbbc04"/><path d="M5.300 0L0 9l2.700 4.700L8 4.500z" fill="#34a853"/><path d="M2.700 13.700h10.600L16 9H5.400z" fill="#4285f4"/><path d="M10.600 9H16l-2.700 4.700z" fill="#ea4335"/></svg></span><span class="btxt" style="left:711px;letter-spacing:0px">REOs - Google Dri...</span>
<span class="bico" style="left:841px"><svg width="15" height="15" viewBox="0 0 16 16"><circle cx="8" cy="8" r="7.500" fill="#4a4d51"/><path d="M8.300 .8c2.200.2 4 1.300 5.200 3l-1.800.7-.7 1.800-2.600.4-.8 1.300 1.200 1.600 2.200.1.500 1.900 1.300 1.100c-1.200 1.400-2.900 2.300-4.800 2.500l-.1-2.100-1.600-1.400.1-2-3-2.300-1.900.300c.3-1.500 1-2.800 2-3.900l1.700 1.100 2.100-.2.900-1.700z" fill="#ffffff"/></svg></span><span class="btxt" style="left:864px;letter-spacing:0.21px">Realtor Application</span>
<span class="bico" style="left:989px"><svg width="15" height="15" viewBox="0 0 16 16"><circle cx="8" cy="8" r="7.500" fill="#4a4d51"/><path d="M8.300 .8c2.200.2 4 1.300 5.200 3l-1.800.7-.7 1.800-2.600.4-.8 1.300 1.200 1.600 2.200.1.500 1.900 1.300 1.100c-1.200 1.400-2.900 2.300-4.800 2.500l-.1-2.100-1.600-1.400.1-2-3-2.300-1.900.300c.3-1.500 1-2.800 2-3.900l1.700 1.100 2.100-.2.900-1.700z" fill="#ffffff"/></svg></span><span class="btxt" style="left:1012px;letter-spacing:0.1px">Asset Valuation W...</span>
<span class="bico" style="left:1141px"><svg width="15" height="15" viewBox="0 0 15 15"><path d="M0 1h14v13H0z" fill="#3a46c8"/><path d="M0 1l9 6-9 7z" fill="#f2b21b"/><path d="M14 1L7 8l7 6z" fill="#7b3fd0"/><path d="M0 14l7-5 7 5z" fill="#e6e6f5"/></svg></span><span class="btxt" style="left:1164px;letter-spacing:-0.4px">PICTURE STONE I...</span>
<span class="btxt" style="left:1301px;top:5px;font-size:14px;color:#4a4d51">»</span>
<i class="abs" style="left:1322px;top:6px;width:1px;height:19px;background:#d5d8dc"></i>
<svg class="abs" style="left:1329px;top:4px" width="21" height="20" viewBox="0 0 21 20"><rect x="4.700" y="4.700" width="13.600" height="13.600" fill="none" stroke="#4a4d51" stroke-width="1.400"/><path d="M7.500 8.500h2M7.500 11.500h2M7.500 14.500h2M11 8.500h5M11 11.500h5M11 14.500h5" stroke="#4a4d51" stroke-width="1.300"/><circle cx="3.500" cy="3.500" r="2.300" fill="#d50000"/></svg>
<span class="btxt" style="left:1356px">Reading List</span>
  </div>
</div>
<div id="dock"><div class="di" style="left:5px;background:linear-gradient(90deg,#1e9bf0 0,#1e9bf0 52%,#e9eef3 52%,#e9eef3 100%);border-radius:5px;"><svg width="22" height="22" viewBox="0 0 22 22"><path d="M11.500 2c-1.500 4-2 7-2 10h3c0 3 .2 5 .8 8" fill="none" stroke="#1a3a5a" stroke-width="1"/><path d="M5 14c3 3 9 3 12 0" fill="none" stroke="#1a3a5a" stroke-width="1"/><path d="M6.500 6v2.500M15.500 6v2.500" stroke="#1a3a5a" stroke-width="1.200"/></svg></div>
<div class="di" style="left:32px;background:#d9dde0;border-radius:5px;"><svg width="22" height="22" viewBox="0 0 22 22"><rect x="3.0" y="3.0" width="4" height="4" rx="1" fill="#f05545"/><rect x="8.5" y="3.0" width="4" height="4" rx="1" fill="#f7b42c"/><rect x="14.0" y="3.0" width="4" height="4" rx="1" fill="#3ec96a"/><rect x="3.0" y="8.5" width="4" height="4" rx="1" fill="#3d8bf2"/><rect x="8.5" y="8.5" width="4" height="4" rx="1" fill="#e54db4"/><rect x="14.0" y="8.5" width="4" height="4" rx="1" fill="#f05545"/><rect x="3.0" y="14.0" width="4" height="4" rx="1" fill="#8a5cf0"/><rect x="8.5" y="14.0" width="4" height="4" rx="1" fill="#2fb3e8"/><rect x="14.0" y="14.0" width="4" height="4" rx="1" fill="#f7b42c"/></svg></div>
<div class="di" style="left:59px;background:linear-gradient(180deg,#3fa9f8,#1a6fe0);border-radius:5px;"><svg width="22" height="22" viewBox="0 0 22 22"><rect x="4" y="7" width="14" height="9" rx="1" fill="#fff"/><path d="M4 7.500l7 5 7-5" fill="none" stroke="#9ec6f3" stroke-width="1"/></svg><i style="position:absolute;left:13px;top:-3px;width:13px;height:9px;border-radius:5px;background:#f0352b"></i></div>
<div class="di" style="left:86px;background:#b98a52;border-radius:5px;"><svg width="22" height="22" viewBox="0 0 22 22"><rect x="4" y="3" width="14" height="16" rx="2" fill="#c99a60"/><circle cx="11" cy="9" r="2.500" fill="#a5753f"/><path d="M6.500 16c.5-3 8.500-3 9 0z" fill="#a5753f"/></svg></div>
<div class="di" style="left:113px;background:#fff;border-radius:5px;"><svg width="22" height="22" viewBox="0 0 22 22"><path d="M0 5a5 5 0 0 1 5-5h12a5 5 0 0 1 5 5v2H0z" fill="#f0443a"/><text x="11" y="18.500" font-family="Liberation Sans,sans-serif" font-size="12" fill="#333" text-anchor="middle">6</text><text x="11" y="5.500" font-family="Liberation Sans,sans-serif" font-size="4" fill="#fff" text-anchor="middle">OCT</text></svg></div>
<div class="di" style="left:140px;background:linear-gradient(180deg,#fbd94a 0,#fbd94a 28%,#fbfaf3 28%,#f3f1e6 100%);border-radius:5px;"></div>
<div class="di" style="left:167px;background:#dfeccf;border-radius:5px;overflow:hidden;"><svg width="22" height="22" viewBox="0 0 22 22"><path d="M0 14L22 6v5L0 19z" fill="#f6d55c"/><path d="M12 0h10v9z" fill="#7fd08a"/><path d="M7 0v22" stroke="#fff" stroke-width="2"/><circle cx="7" cy="13" r="2.500" fill="#2f7df0"/><circle cx="16" cy="17" r="2" fill="#4a90f2"/></svg></div>
<div class="di" style="left:194px;background:#fafafa;border-radius:5px;"><svg width="22" height="22" viewBox="0 0 22 22"><g transform="translate(11 11)"><ellipse rx="2.600" ry="4.500" cy="-4" fill="#f7a72c" opacity=".9"/><ellipse rx="2.600" ry="4.500" cy="-4" fill="#f3d13a" opacity=".9" transform="rotate(45)"/><ellipse rx="2.600" ry="4.500" cy="-4" fill="#8dcf4f" opacity=".9" transform="rotate(90)"/><ellipse rx="2.600" ry="4.500" cy="-4" fill="#4cc6a5" opacity=".9" transform="rotate(135)"/><ellipse rx="2.600" ry="4.500" cy="-4" fill="#4a9ff0" opacity=".9" transform="rotate(180)"/><ellipse rx="2.600" ry="4.500" cy="-4" fill="#8a6be0" opacity=".9" transform="rotate(225)"/><ellipse rx="2.600" ry="4.500" cy="-4" fill="#d964c0" opacity=".9" transform="rotate(270)"/><ellipse rx="2.600" ry="4.500" cy="-4" fill="#f0584a" opacity=".9" transform="rotate(315)"/></g></svg></div>
<div class="di" style="left:221px;background:linear-gradient(180deg,#5ff078,#18c53c);border-radius:5px;"><svg width="22" height="22" viewBox="0 0 22 22"><ellipse cx="11" cy="10.500" rx="6.500" ry="5.300" fill="#fff"/><path d="M7 14l-1.500 3 4-2z" fill="#fff"/></svg></div>
<div class="di" style="left:248px;background:linear-gradient(180deg,#5ff078,#18c53c);border-radius:5px;"><svg width="22" height="22" viewBox="0 0 22 22"><rect x="4" y="7" width="9.500" height="8" rx="2" fill="#fff"/><path d="M14 10l4-2.500v7L14 12z" fill="#fff"/></svg></div>
<div class="di" style="left:275px;background:#d8202a;border-radius:5px;"><svg width="22" height="22" viewBox="0 0 22 22"><rect x="5" y="4" width="9" height="11" fill="#fff" transform="rotate(-8 9 9)"/><circle cx="9.500" cy="8.500" r="2" fill="#d8202a"/><rect x="11" y="11" width="8" height="6" rx="1" fill="#333"/></svg></div>
<div class="di" style="left:302px;background:linear-gradient(180deg,#fb5c74,#f9233b);border-radius:5px;"><svg width="22" height="22" viewBox="0 0 22 22"><path d="M9 15.500V6l7-1.500v9.500" fill="none" stroke="#fff" stroke-width="1.500"/><ellipse cx="7.500" cy="15.500" rx="2" ry="1.600" fill="#fff"/><ellipse cx="14.500" cy="14" rx="2" ry="1.600" fill="#fff"/></svg></div>
<div class="di" style="left:329px;background:linear-gradient(180deg,#c660f0,#8a22c8);border-radius:5px;"><svg width="22" height="22" viewBox="0 0 22 22" fill="none" stroke="#fff"><circle cx="11" cy="10" r="6" stroke-width="1.300"/><circle cx="11" cy="10" r="3.300" stroke-width="1.200"/><circle cx="11" cy="10" r="1.300" fill="#fff"/><path d="M11 12.500v5" stroke-width="2" stroke-linecap="round"/></svg></div>
<div class="di" style="left:356px;background:#fbfbfb;border-radius:5px;"><svg width="22" height="22" viewBox="0 0 22 22"><path d="M5 4h4l8 10v4h-4L5 8z" fill="#f23a52"/><path d="M5 11l5 7H5zM17 11l-5-7h5z" fill="#f77a8a"/></svg></div>
<div class="di" style="left:383px;background:#1b1b1d;border-radius:5px;"><svg width="22" height="22" viewBox="0 0 22 22"><text x="13.500" y="14.500" font-family="Liberation Sans,sans-serif" font-size="8" font-weight="bold" fill="#fff" text-anchor="middle">tv</text><circle cx="6" cy="11.500" r="2" fill="#fff"/></svg></div>
<div class="di" style="left:410px;background:linear-gradient(180deg,#fca338,#f47c0c);border-radius:5px;"><svg width="22" height="22" viewBox="0 0 22 22"><path d="M4 6.500c2.500-1 5-1 7 .5 2-1.500 4.500-1.500 7-.5v9c-2.500-1-5-1-7 .5-2-1.500-4.500-1.500-7-.5z" fill="#fff"/><path d="M11 7v9" stroke="#f47c0c" stroke-width="1"/></svg></div>
<div class="di" style="left:437px;background:linear-gradient(180deg,#2ec0fb,#1a72f0);border-radius:5px;"><svg width="22" height="22" viewBox="0 0 22 22" stroke="#fff" stroke-width="1.800" stroke-linecap="round" fill="none"><path d="M7.500 16l5-9.500M14.500 16l-5-9.500M5 13.500h12"/></svg></div>
<div class="di" style="left:464px;background:#fff;border-radius:5px;"><svg width="22" height="22" viewBox="0 0 22 22"><circle cx="11" cy="11" r="8.500" fill="#e33b2e"/><path d="M11 11L3.700 6.700A8.500 8.500 0 0 0 11 19.500z" fill="#2da94f"/><path d="M11 11l0 8.500A8.500 8.500 0 0 0 18.300 6.700z" fill="#fcc31e"/><path d="M11 11L3.700 6.700A8.500 8.500 0 0 1 18.300 6.700z" fill="#e33b2e"/><circle cx="11" cy="11" r="3.800" fill="#fff"/><circle cx="11" cy="11" r="3" fill="#4285f4"/></svg></div>
<div class="di" style="left:491px;background:#d7d9dc;border-radius:5px;"><svg width="22" height="22" viewBox="0 0 22 22"><circle cx="11" cy="11" r="8.500" fill="#3a3c40"/><circle cx="11" cy="11" r="6" fill="none" stroke="#9a9ca0" stroke-width="1.500"/><circle cx="11" cy="11" r="2.500" fill="#9a9ca0"/><path d="M11 3v16M3 11h16M5.300 5.300l11.400 11.400M16.700 5.300L5.300 16.700" stroke="#6a6c70" stroke-width=".8"/></svg></div>
<div class="di" style="left:518px;background:repeating-linear-gradient(170deg,#f2c21c 0,#f2c21c 3px,#6a5a2a 3px,#6a5a2a 5px);border-radius:11px;"></div>
<i style="position:absolute;left:549px;top:5px;width:1px;height:27px;background:rgba(40,90,50,.6)"></i>
<div class="di" style="left:558px;background:#fafafa;border-radius:5px;"><svg width="22" height="22" viewBox="0 0 22 22"><rect x="1" y="1" width="20" height="20" rx="4" fill="none" stroke="#f28a1e" stroke-width="2"/><path d="M6.500 16V6h5.500a3 3 0 0 1 0 6H8.500l7 4" fill="none" stroke="#1565c0" stroke-width="2.200"/></svg><i style="position:absolute;left:15px;top:-3px;width:9px;height:9px;border-radius:5px;background:#f0352b"></i></div>
<div class="di" style="left:585px;background:transparent"><svg width="22" height="22" viewBox="0 0 22 22"><circle cx="11" cy="11.500" r="8.500" fill="none" stroke="#3f7f4f" stroke-width="1.400"/><path d="M6 3l3.500 2-2 2.500" fill="none" stroke="#a05a3a" stroke-width="1.200"/></svg></div>
<i style="position:absolute;left:616px;top:5px;width:1px;height:27px;background:rgba(40,90,50,.6)"></i>
<div class="di" style="left:624px;background:transparent"><svg width="22" height="24" viewBox="0 0 22 24"><path d="M3.500 4h15l-1.800 18H5.300z" fill="#e4e8e6" stroke="#b8c4be" stroke-width=".8"/><ellipse cx="11" cy="4" rx="7.500" ry="2" fill="#cfd5d2" stroke="#aab5b0" stroke-width=".6"/><path d="M8 8v11M11 8v11M14 8v11" stroke="#c5ccc8" stroke-width=".8"/></svg></div>
<i class="dd" style="left:14.5px"></i>
<i class="dd" style="left:68.5px"></i>
<i class="dd" style="left:149.5px"></i>
<i class="dd" style="left:473.5px"></i>
<i class="dd" style="left:500.5px"></i>
<i class="dd" style="left:567.5px"></i></div>
</body>
</html>
